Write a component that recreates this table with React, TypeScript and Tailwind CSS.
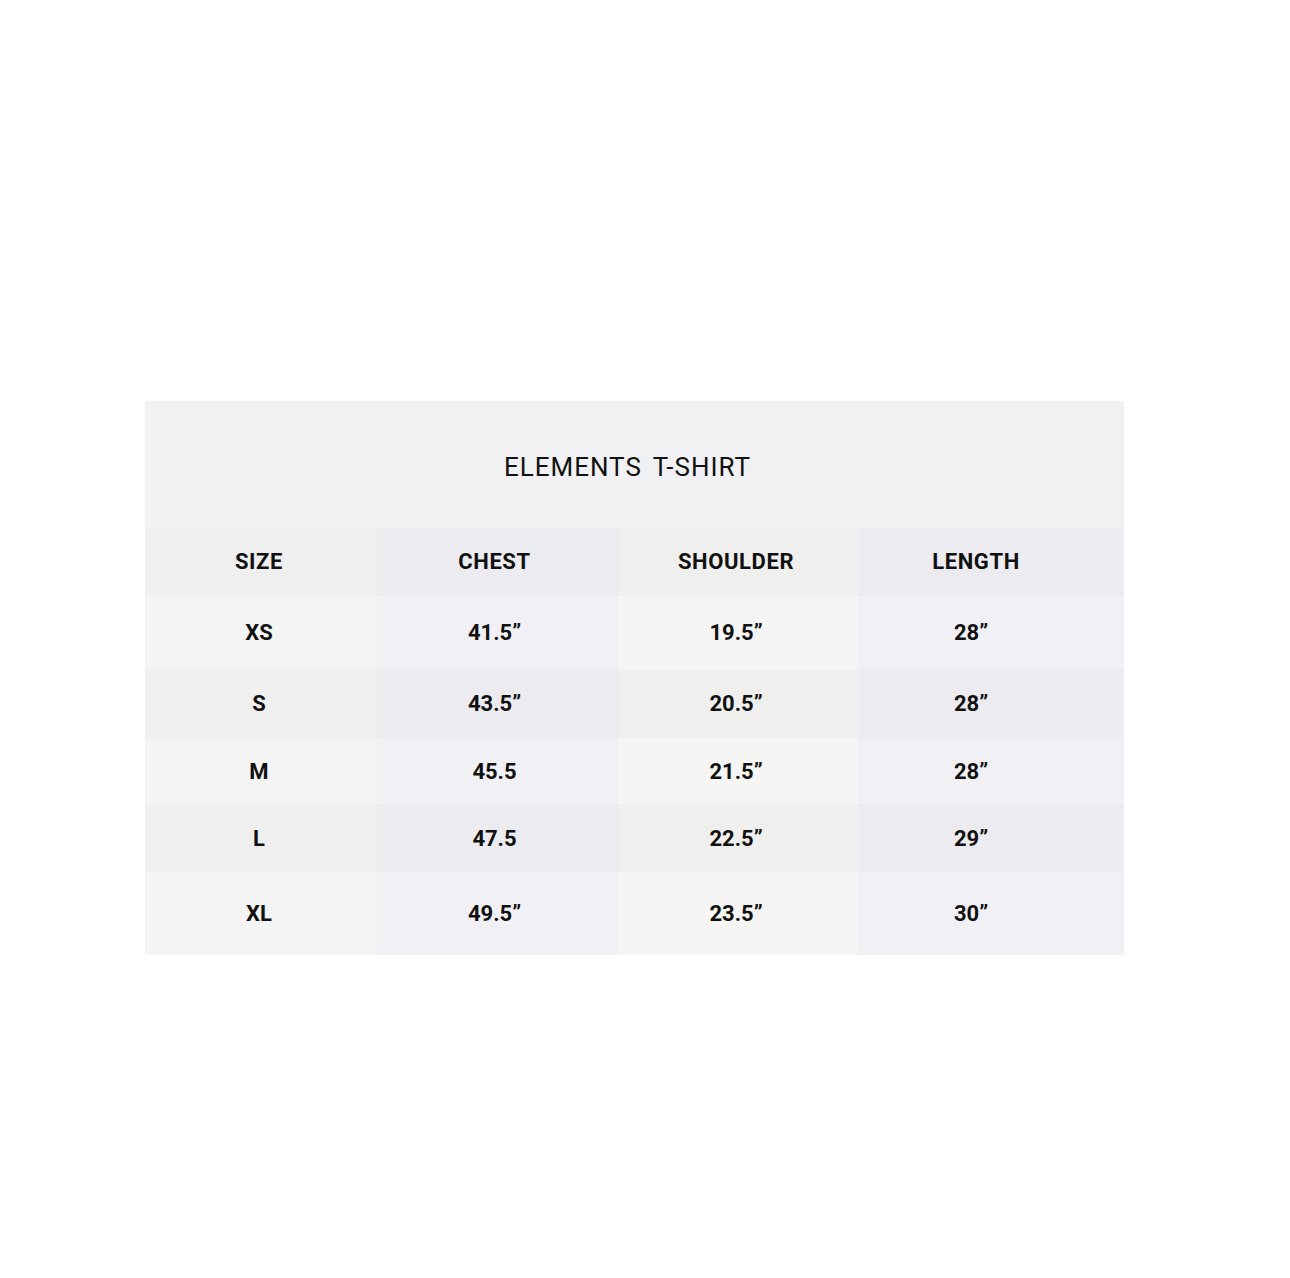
const rows = [
  { size: "XS", chest: "41.5”", shoulder: "19.5”", length: "28”", h: "h-[73px]" },
  { size: "S", chest: "43.5”", shoulder: "20.5”", length: "28”", h: "h-[69px]" },
  { size: "M", chest: "45.5", shoulder: "21.5”", length: "28”", h: "h-[66px]" },
  { size: "L", chest: "47.5", shoulder: "22.5”", length: "29”", h: "h-[68px]" },
  { size: "XL", chest: "49.5”", shoulder: "23.5”", length: "30”", h: "h-[83px]" },
];

const light = ["bg-[#f4f4f4]", "bg-[#f1f1f5]", "bg-[#f5f5f4]", "bg-[#f1f1f5]"];
const dark = ["bg-[#efefef]", "bg-[#ebebf0]", "bg-[#efefee]", "bg-[#ebebf0]"];
// nudges so the text sits where it does in the chart
const headPad = ["pr-[4px]", "pr-[6px]", "pr-[4px]", "pr-[30px]"];
const pad = ["pr-[4px]", "pr-[6px]", "pr-[4px]", "pr-[40px]"];

const cell = "flex items-center justify-center";

export default function App() {
  return (
    <div className="min-h-[1278px] w-full bg-white pt-[401px] pl-[145px] font-['Roboto',sans-serif] text-[#111]">
      <div className="w-[979px] bg-[#f1f1f4]">
        <div className="flex h-[127px] items-center justify-center pt-[5px] pr-[14px]">
          <h1 className="text-[26px] font-normal tracking-[1px] [word-spacing:4px]">ELEMENTS T-SHIRT</h1>
        </div>
        <div className="grid grid-cols-[232px_241px_240px_266px] text-[22px] font-bold">
          {["SIZE", "CHEST", "SHOULDER", "LENGTH"].map((t, i) => (
            <div key={t} className={`${cell} h-[68px] pb-[2px] tracking-[0.6px] ${dark[i]} ${headPad[i]}`}>
              {t}
            </div>
          ))}
          {rows.map((r, ri) => {
            const bg = ri % 2 === 0 ? light : dark;
            return [r.size, r.chest, r.shoulder, r.length].map((v, i) => (
              <div key={`${r.size}-${i}`} className={`${cell} ${r.h} ${bg[i]} ${pad[i]}`}>
                {v}
              </div>
            ));
          })}
        </div>
      </div>
    </div>
  );
}
